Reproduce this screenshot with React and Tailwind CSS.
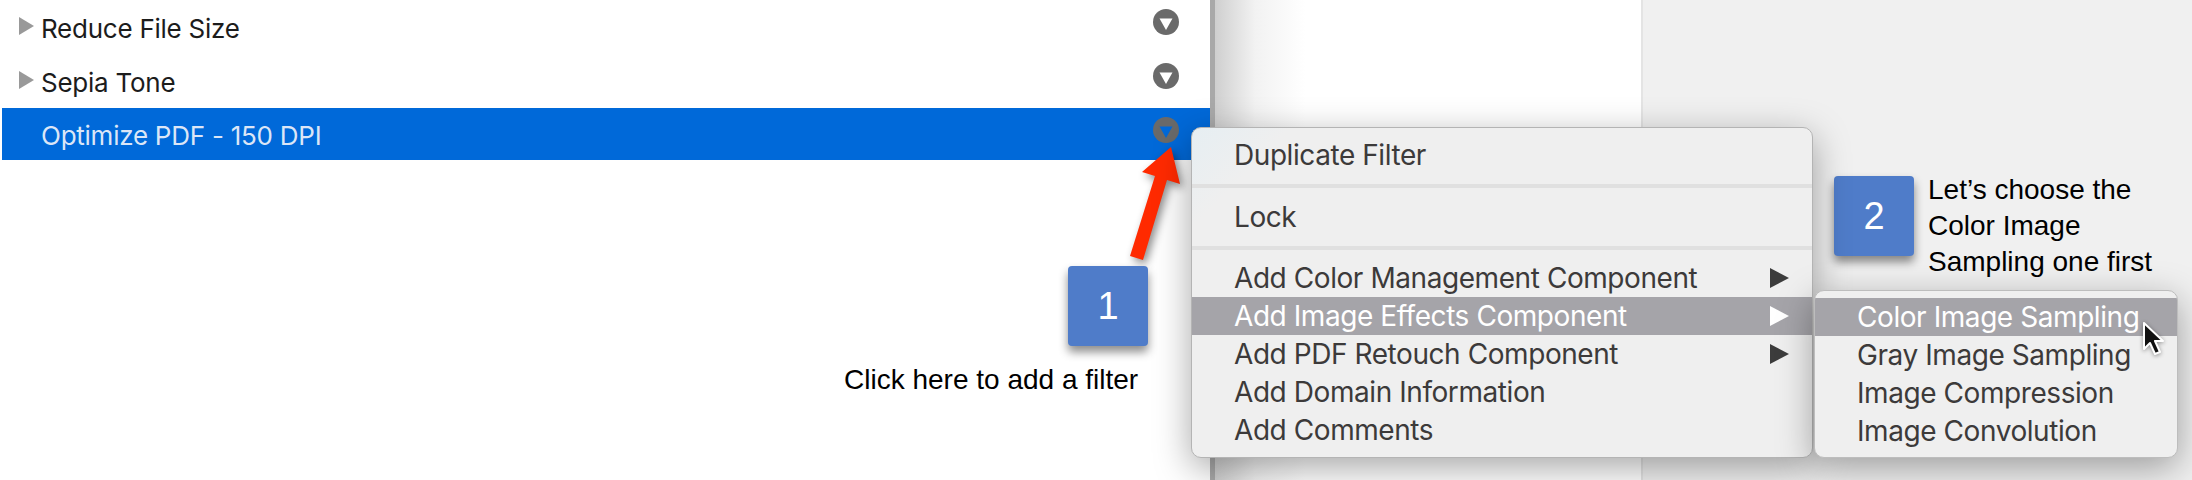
const SF = "font-['Inter','Noto_Sans',sans-serif]"
const HELV = "font-['Liberation_Sans',Arial,sans-serif]"

// little "v in a circle" button at the end of each filter row
function RowButton({ selected }) {
  return (
    <svg width="26" height="26" viewBox="0 0 26 26" className={`shrink-0 ${selected ? '-mt-[8px]' : '-mt-[10px]'}`}>
      <circle cx="13" cy="13" r="13" fill="#6a6a6a" />
      <path d="M6.5 9.5h13L13 21z" fill={selected ? '#0069d9' : '#ffffff'} />
    </svg>
  )
}

function FilterRow({ label, selected }) {
  return (
    <div
      className={`flex items-center pr-[31px] ${selected ? 'h-[52px] ml-[2px] bg-[#0069d9] text-[#dbe6f7]' : 'h-[54px] text-[#1c1c1c]'}`}
    >
      <div className={selected ? 'w-[39px]' : 'w-[41px] pl-[19px]'}>
        {!selected && (
          <svg width="15" height="18" viewBox="0 0 15 18" className="-mt-[2px]">
            <path d="M0 0l15 9-15 9z" fill="#999999" />
          </svg>
        )}
      </div>
      <span className={`flex-1 text-[26px] tracking-[-0.25px] ${selected ? 'pt-[2px]' : 'pt-[2px]'} ${SF}`}>{label}</span>
      <RowButton selected={selected} />
    </div>
  )
}

function MenuItem({ label, hasSub, active }) {
  return (
    <div
      className={`flex h-[38px] items-center pl-[42px] pr-[23px] text-[28px] tracking-[-0.43px] ${active ? 'bg-[#a5a4a9] text-white' : 'text-[#3c3a3a]'}`}
    >
      <span className="flex-1 whitespace-nowrap">{label}</span>
      {hasSub && (
        <svg width="19" height="20" viewBox="0 0 19 20">
          <path d="M0 0l19 10L0 20z" fill={active ? '#ffffff' : '#3c3c3c'} />
        </svg>
      )}
    </div>
  )
}

function Badge({ n, className }) {
  return (
    <div
      className={`absolute flex h-[80px] w-[80px] items-center justify-center rounded-[4px] bg-[#4f7cc9] text-[38px] text-white shadow-[0_6px_10px_rgba(0,0,0,0.45)] ${HELV} ${className}`}
    >
      {n}
    </div>
  )
}

export default function App() {
  return (
    <div className="relative flex h-[480px] w-[2192px] overflow-hidden bg-white">
      {/* filter list */}
      <div className="w-[1210px] shrink-0 bg-white">
        <FilterRow label="Reduce File Size" />
        <FilterRow label="Sepia Tone" />
        <FilterRow label="Optimize PDF - 150 DPI" selected />
      </div>
      <div className="w-[5px] shrink-0 bg-[#a9a9a9]" />
      <div className="w-[428px] shrink-0 border-r-2 border-[#e4e4e4] bg-[linear-gradient(90deg,#cfcfcf_0,#f2f2f2_40px,#ffffff_90px)]" />
      <div className="flex-1 bg-[#f0f0f0]" />

      {/* annotations */}
      <svg
        width="80"
        height="130"
        viewBox="1120 140 80 130"
        className="absolute left-[1120px] top-[140px] overflow-visible drop-shadow-[3px_4px_4px_rgba(0,0,0,0.45)]"
      >
        <path d="M1171 147l9 37-13-4-24 80-13-4 25-80-13-4z" fill="#ff2a00" />
      </svg>

      <Badge n="1" className="left-[1068px] top-[266px]" />
      <div className={`absolute left-[844px] top-[365px] whitespace-nowrap text-[28px] leading-[30px] text-black ${HELV}`}>
        Click here to add a filter
      </div>

      <Badge n="2" className="left-[1834px] top-[176px]" />
      <div className={`absolute left-[1928px] top-[172px] whitespace-nowrap text-[28px] leading-[36px] text-black ${HELV}`}>
        Let’s choose the
        <br />
        Color Image
        <br />
        Sampling one first
      </div>

      {/* main context menu */}
      <div
        className={`absolute left-[1191px] top-[127px] h-[331px] w-[622px] overflow-hidden rounded-[10px] border border-[#b4b4b4] bg-[#efefef] bg-[linear-gradient(135deg,#e6eef2_0,#efefef_70px)] shadow-[0_10px_36px_rgba(0,0,0,0.35)] ${SF}`}
      >
        <div className="flex h-[56px] items-center pb-[2px] pl-[42px] text-[28px] tracking-[-0.43px] text-[#3c3a3a]">
          Duplicate Filter
        </div>
        <div className="h-[4px] bg-[#e0e0e0]" />
        <div className="flex h-[58px] items-center pl-[42px] text-[28px] tracking-[-0.43px] text-[#3c3a3a]">Lock</div>
        <div className="h-[4px] bg-[#e0e0e0]" />
        <div className="h-[9px]" />
        <MenuItem label="Add Color Management Component" hasSub />
        <MenuItem label="Add Image Effects Component" hasSub active />
        <MenuItem label="Add PDF Retouch Component" hasSub />
        <MenuItem label="Add Domain Information" />
        <MenuItem label="Add Comments" />
      </div>

      {/* submenu */}
      <div
        className={`absolute left-[1814px] top-[290px] h-[168px] w-[364px] overflow-hidden rounded-[10px] border border-[#bdbdbd] bg-[#efefef] pt-[7px] shadow-[0_10px_36px_rgba(0,0,0,0.35)] ${SF}`}
      >
        <MenuItem label="Color Image Sampling" active />
        <MenuItem label="Gray Image Sampling" />
        <MenuItem label="Image Compression" />
        <MenuItem label="Image Convolution" />
      </div>

      {/* mouse pointer */}
      <svg width="24" height="36" viewBox="0 0 24 36" className="absolute left-[2142px] top-[322px] drop-shadow-[0_1px_2px_rgba(0,0,0,0.4)]">
        <path d="M2 1v26l6-6 5 11 5-2-5-11h8z" fill="#111111" stroke="#ffffff" strokeWidth="2" strokeLinejoin="round" />
      </svg>
    </div>
  )
}
